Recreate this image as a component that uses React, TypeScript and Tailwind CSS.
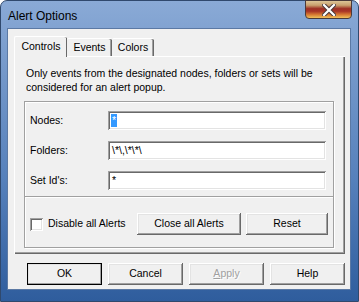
import React from 'react';

const raised =
  'shadow-[inset_-1px_-1px_0_#696969,inset_1px_1px_0_#ffffff,inset_-2px_-2px_0_#a0a0a0,inset_2px_2px_0_#e3e3e3]';
const sunken =
  'shadow-[inset_1px_1px_0_#a0a0a0,inset_-1px_-1px_0_#ffffff,inset_2px_2px_0_#696969,inset_-2px_-2px_0_#e3e3e3]';

const Field: React.FC<{ label: string; value: string; selected?: boolean }> = ({ label, value, selected }) => (
  <div className="flex items-center h-[19px]">
    <span className="w-[83px] pl-[5px]">{label}</span>
    <div className={`flex-1 h-[19px] bg-white flex items-center pl-[3px] ${sunken}`}>
      {selected ? (
        <span className="bg-[#3399ff] text-white leading-[13px] px-[1px]">{value}</span>
      ) : (
        <span className="pl-[1px]">{value}</span>
      )}
    </div>
  </div>
);

const Button: React.FC<{ label: React.ReactNode; w: string; def?: boolean; disabled?: boolean }> = ({
  label,
  w,
  def,
  disabled,
}) => (
  <div
    className={`${w} h-[22px] flex items-center justify-center bg-[#f0f0f0] ${raised} ${
      def ? 'outline outline-1 outline-black -outline-offset-1' : ''
    } ${disabled ? 'text-[#a0a0a0] [text-shadow:1px_1px_0_#ffffff]' : ''}`}
  >
    {label}
  </div>
);

export default function App() {
  return (
    <div className="w-[359px] h-[302px] flex flex-col rounded-t-[7px] border border-[#30496d] bg-[linear-gradient(180deg,#8aaad6_0%,#7397c9_25%,#5580bb_60%,#2f5d9d_100%)] font-['Liberation_Sans',Arial,sans-serif] text-[10.5px] text-black">
      {/* title bar */}
      <div className="h-[27px] flex items-start pl-[7px] pr-[6px]">
        <span className="mt-[6px] text-[12px]">Alert Options</span>
        <div className="ml-auto w-[47px] h-[19px] -mt-[1px] rounded-b-[4px] border border-[#4a3a3a] bg-[linear-gradient(180deg,#dcc597_0%,#c9a06e_25%,#9e3024_45%,#a83426_60%,#d77a32_80%,#efc05a_100%)] flex items-center justify-center">
          <svg width="14" height="12" viewBox="0 0 14 12">
            <path d="M2 1 L12 11 M12 1 L2 11" stroke="#4a3a3a" strokeWidth="4.2" strokeLinecap="square" />
            <path d="M2 1 L12 11 M12 1 L2 11" stroke="#ffffff" strokeWidth="2.2" strokeLinecap="square" />
          </svg>
        </div>
      </div>

      {/* client area */}
      <div className="ml-[6px] w-[344px] h-[262px] bg-[#f0f0f0] border border-[#5b79a4] pt-[7px] pl-[6px]">
        {/* tabs */}
        <div className="flex items-end h-[20px]">
          <div className="relative z-10 w-[53px] h-[21px] -mb-[1px] bg-[#f0f0f0] border-t border-l border-white shadow-[inset_-1px_0_0_#696969] rounded-t-[2px] flex items-center justify-center pb-[1px]">
            Controls
          </div>
          <div className="w-[45px] h-[18px] border-t border-white shadow-[inset_-1px_0_0_#696969,inset_-2px_0_0_#a0a0a0] rounded-t-[2px] flex items-center justify-center">
            Events
          </div>
          <div className="w-[42px] h-[18px] border-t border-white shadow-[inset_-1px_0_0_#696969,inset_-2px_0_0_#a0a0a0] rounded-t-[2px] flex items-center justify-center">
            Colors
          </div>
        </div>

        {/* tab panel */}
        <div className="w-[331px] h-[198px] border-t border-l border-white shadow-[inset_-1px_-1px_0_#696969,inset_-2px_-2px_0_#a0a0a0] pt-[9px] pl-[11px]">
          <p className="leading-[14px] pr-[6px]">
            Only events from the designated nodes, folders or sets will be considered for an alert popup.
          </p>

          <div className="mt-[7px] -ml-[2px] w-[310px] border border-[#a0a0a0] shadow-[1px_1px_0_#ffffff,inset_1px_1px_0_#ffffff]">
            <div className="pt-[9px] pb-[6px] pr-[7px] flex flex-col gap-[11px]">
              <Field label="Nodes:" value="*" selected />
              <Field label="Folders:" value="\*\,\*\*\" />
              <Field label="Set Id's:" value="*" />
            </div>
            <div className="border-t border-[#a0a0a0] shadow-[inset_0_1px_0_#ffffff] pt-[16px] pb-[12px] pl-[5px] flex items-center">
              <div className={`w-[13px] h-[13px] bg-white ${sunken}`} />
              <span className="ml-[5px] w-[89px]">Disable all Alerts</span>
              <Button label="Close all Alerts" w="w-[104px] h-[20px]" />
              <div className="ml-[5px]">
                <Button label="Reset" w="w-[82px]" />
              </div>
            </div>
          </div>
        </div>

        {/* bottom buttons */}
        <div className="mt-[9px] pl-[13px] flex gap-[6px]">
          <Button label="OK" w="w-[75px]" def />
          <Button label="Cancel" w="w-[75px]" />
          <Button
            label={
              <span>
                <span className="underline">A</span>pply
              </span>
            }
            w="w-[75px]"
            disabled
          />
          <Button label="Help" w="w-[75px]" />
        </div>
      </div>
    </div>
  );
}
